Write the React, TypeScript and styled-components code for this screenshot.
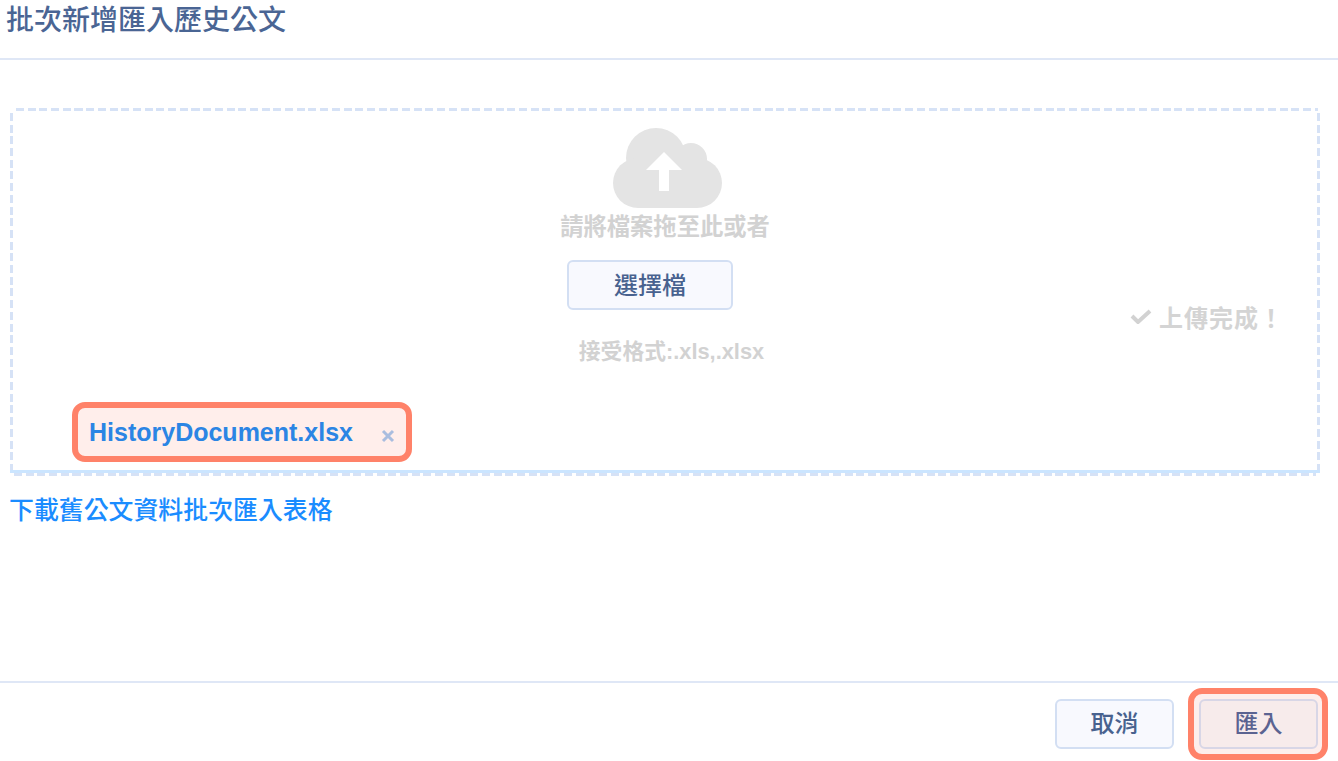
import React from 'react';
import styled, { createGlobalStyle } from 'styled-components';

const GlobalStyle = createGlobalStyle`
  html, body {
    margin: 0;
    padding: 0;
    background: #fff;
  }
  * {
    box-sizing: border-box;
  }
  body {
    font-family: "Liberation Sans", "Noto Sans CJK TC", sans-serif;
  }
`;

const Page = styled.div`
  width: 1338px;
  height: 761px;
  display: flex;
  flex-direction: column;
  overflow: hidden;
`;

const Header = styled.header`
  height: 60px;
  flex: none;
  padding: 0 6px;
  border-bottom: 2px solid #dfe7f6;
`;

const Title = styled.h1`
  margin: 0;
  font-size: 28px;
  line-height: 42px;
  font-weight: 500;
  color: #4a6594;
`;

const Body = styled.main`
  flex: 1;
  padding: 48px 18px 0 10px;
`;

const dash = '#d6e2f6';

const DropZone = styled.section`
  position: relative;
  height: 368px;
  display: flex;
  flex-direction: column;
  padding: 2px;
  background-image:
    repeating-linear-gradient(90deg, ${dash} 0 8px, transparent 8px 11.7px),
    repeating-linear-gradient(90deg, ${dash} 0 8px, transparent 8px 11.7px),
    repeating-linear-gradient(0deg, ${dash} 0 8px, transparent 8px 11.7px),
    repeating-linear-gradient(0deg, ${dash} 0 8px, transparent 8px 11.7px);
  background-size: calc(100% - 8px) 3px, calc(100% - 8px) 3px, 3px calc(100% - 8px), 3px calc(100% - 8px);
  background-position: 6px 0, 4px 100%, 0 4px, 100% 4px;
  background-repeat: no-repeat;
`;

const ProgressLine = styled.div`
  position: absolute;
  left: 0;
  right: 0;
  bottom: 3px;
  height: 3px;
  background: #cbe5ff;
`;

const Center = styled.div`
  display: grid;
  grid-template-columns: 1fr auto 1fr;
  padding-top: 18px;
  height: 292px;
`;

const Prompt = styled.div`
  grid-column: 2;
  display: flex;
  flex-direction: column;
  align-items: center;
`;

const Cloud = styled.svg`
  display: block;
  width: 110px;
  height: 80px;
  margin-left: 5px;
`;

const HintText = styled.div`
  font-size: 23.3px;
  line-height: 34px;
  height: 34px;
  margin-top: 2px;
  font-weight: 700;
  color: #d2d2d2;
  white-space: nowrap;
`;

const Button = styled.button<{ $active?: boolean }>`
  width: 119px;
  height: 50px;
  padding: 0 0 5px;
  border: 2px solid ${p => (p.$active ? '#d8d6e6' : '#d3dff3')};
  border-radius: 6px;
  background: ${p => (p.$active ? '#f7ebeb' : '#f8f9fe')};
  color: ${p => (p.$active ? '#5b6391' : '#48628f')};
  font-family: inherit;
  font-size: 24px;
  font-weight: 500;
`;

const PickButton = styled(Button)`
  width: 166px;
  margin: 16px 0 0 -30px;
  padding-bottom: 3px;
`;

const FormatText = styled.div`
  margin: 25px 0 0 13px;
  font-size: 21.8px;
  line-height: 34px;
  font-weight: 700;
  color: #d2d2d2;
  white-space: nowrap;
`;

const Status = styled.div`
  grid-column: 3;
  justify-self: end;
  margin: 171px 34px 0 0;
  height: 34px;
  display: flex;
  align-items: center;
  gap: 7px;
  font-size: 24px;
  font-weight: 700;
  letter-spacing: 1px;
  color: #d4d4d4;
`;

const Files = styled.div`
  padding-left: 60px;
`;

const FileTag = styled.div`
  width: 340px;
  height: 60px;
  padding: 0 11px;
  display: flex;
  align-items: center;
  justify-content: space-between;
  border: 6px solid #ff8269;
  border-radius: 13px;
  background: #ffeeeb;
`;

const FileName = styled.span`
  font-size: 25px;
  font-weight: 700;
  color: #2b85e4;
`;

const RemoveIcon = styled.svg`
  display: block;
  width: 14px;
  height: 14px;
  margin-top: 7px;
`;

const TemplateLink = styled.a`
  display: block;
  margin: 16px 0 0 -1px;
  font-size: 24.9px;
  line-height: 36px;
  font-weight: 500;
  color: #1a8cff;
  text-decoration: none;
`;

const Footer = styled.footer`
  height: 80px;
  flex: none;
  padding: 5px 10px 0 0;
  display: flex;
  justify-content: flex-end;
  align-items: flex-start;
  gap: 14px;
  border-top: 2px solid #dfe7f6;
`;

const CancelButton = styled(Button)`
  margin-top: 11px;
`;

const Highlight = styled.div`
  padding: 5px 4px 5px 5px;
  border: 6px solid #ff8269;
  border-radius: 14px;
  background: #fdeeec;
`;

export default function App() {
  return (
    <Page>
      <GlobalStyle />
      <Header>
        <Title>批次新增匯入歷史公文</Title>
      </Header>
      <Body>
        <DropZone>
          <Center>
            <Prompt>
              <Cloud viewBox="0 0 110 80">
                <g fill="#e4e4e4">
                  <circle cx="44" cy="30" r="30" />
                  <circle cx="79" cy="31" r="16" />
                  <circle cx="26" cy="55" r="25" />
                  <circle cx="85" cy="55" r="25" />
                  <rect x="26" y="30" width="59" height="50" />
                </g>
                <path fill="#fff" d="M52 24 34 42h13v21h10V42h13Z" />
              </Cloud>
              <HintText>請將檔案拖至此或者</HintText>
              <PickButton>選擇檔</PickButton>
              <FormatText>接受格式:.xls,.xlsx</FormatText>
            </Prompt>
            <Status>
              <svg width="22" height="16" viewBox="0 0 22 16">
                <path d="M2 8l6 6L20 3" fill="none" stroke="#d2d2d2" strokeWidth="4" />
              </svg>
              上傳完成！
            </Status>
          </Center>
          <Files>
            <FileTag>
              <FileName>HistoryDocument.xlsx</FileName>
              <RemoveIcon viewBox="0 0 14 14">
                <path d="M2 2l10 10M12 2 2 12" stroke="#a9bddf" strokeWidth="3" />
              </RemoveIcon>
            </FileTag>
          </Files>
          <ProgressLine />
        </DropZone>
        <TemplateLink href="#">下載舊公文資料批次匯入表格</TemplateLink>
      </Body>
      <Footer>
        <CancelButton>取消</CancelButton>
        <Highlight>
          <Button $active>匯入</Button>
        </Highlight>
      </Footer>
    </Page>
  );
}
